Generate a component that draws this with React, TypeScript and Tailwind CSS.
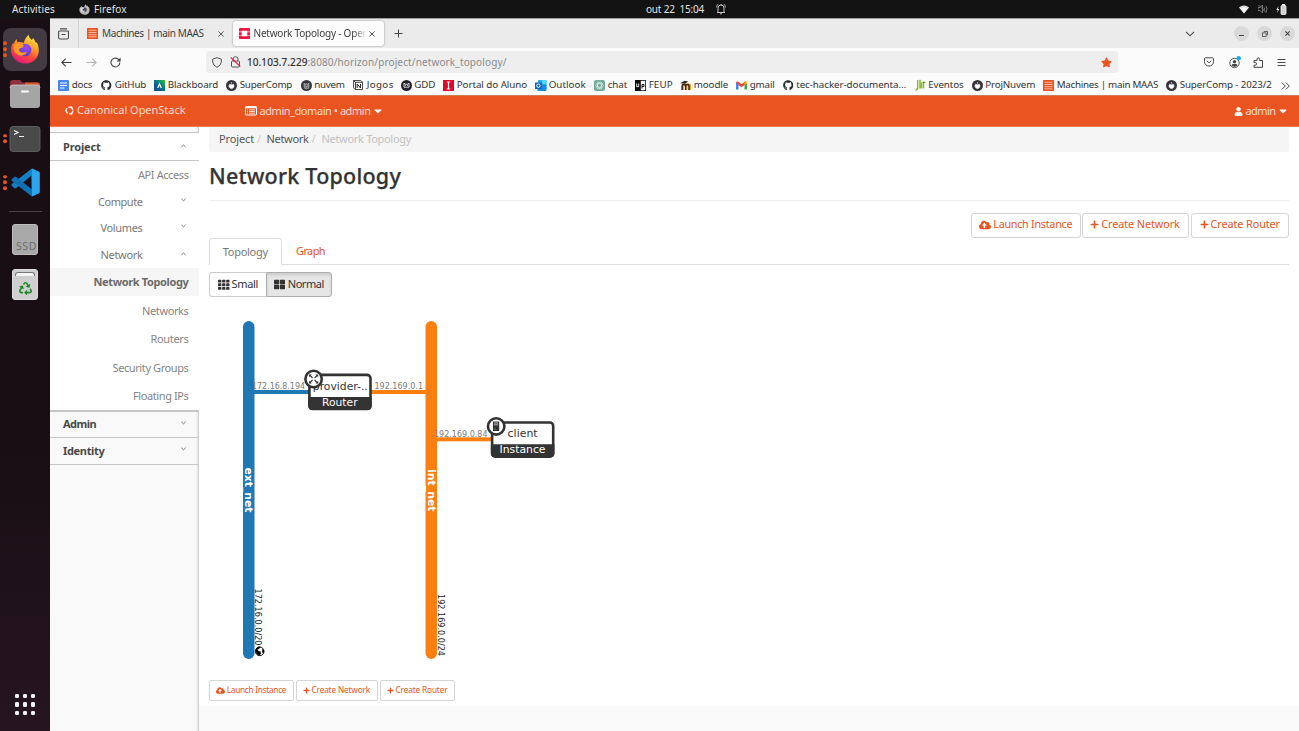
import { useLayoutEffect, useRef, type ReactNode } from "react";
import { FaCloudUploadAlt, FaPlus, FaTh, FaThLarge, FaUser, FaCaretDown, FaStar, FaGithub, FaRecycle } from "react-icons/fa";

/** Single line of text whose tracking is tuned so that it fills exactly `w` pixels. */
function Fit({ w, children, className = "" }: { w: number; children: string; className?: string }) {
  const ref = useRef<HTMLSpanElement>(null);
  useLayoutEffect(() => {
    const el = ref.current;
    if (!el) return;
    el.style.letterSpacing = "0px";
    const range = document.createRange();
    range.selectNodeContents(el);
    const natural = range.getBoundingClientRect().width;
    el.style.letterSpacing = `${(w - natural) / children.length}px`;
  }, [w, children]);
  return (
    <span ref={ref} className={`inline-block shrink-0 whitespace-pre ${className}`} style={{ width: w }}>
      {children}
    </span>
  );
}

/* ---------- system icons ---------- */

function FirefoxLogo({ mono = false, size }: { mono?: boolean; size: number }) {
  return (
    <svg width={size} height={size} viewBox="0 0 30 30">
      <defs>
        <linearGradient id="fxBody" x1="0.8" y1="0" x2="0.3" y2="1">
          <stop offset="0" stopColor="#fff44f" />
          <stop offset="0.35" stopColor="#ffa32b" />
          <stop offset="0.65" stopColor="#ff4a3d" />
          <stop offset="1" stopColor="#e3157f" />
        </linearGradient>
        <radialGradient id="fxGlobe" cx="0.6" cy="0.3" r="0.8">
          <stop offset="0" stopColor="#a14af5" />
          <stop offset="1" stopColor="#4a3ad0" />
        </radialGradient>
      </defs>
      <path
        d="M18.500.8c.4 2.300 1.600 3.700 3.200 5.100.7-.2.9-1 1-1.900 1.600 1.200 2.600 3.200 3.100 5.100l1-.9c2.200 4.200 2.800 9.700.7 14-2.300 4.700-7 7.300-12.200 7.300C7.300 29.500 1 23.600 1 16c0-3.200.9-5.700 2.400-7.500l.4 2c.3-2.300 1.300-4.100 2.900-5.600 0 1.500.5 2.500 1.300 3.300 2.400-.5 4.300-.1 5.800.9C14.500 5.600 16.500 2.800 18.500.8z"
        fill={mono ? "#b9b9b9" : "url(#fxBody)"}
      />
      <circle cx="15" cy="16" r="6.300" fill={mono ? "#4b4b4b" : "url(#fxGlobe)"} />
      <path
        d="M3.500 11c2.700-2.300 7.500-2.200 10.300.2l-1 2c-1 .9-2.400.6-3.300 1.600-1 1.200.2 3.300 2 3.700 2 .5 3.700-.8 5.500-.2-1.500 2.700-5 4-8.200 3C5 20 3 16 3.500 11z"
        fill={mono ? "#d5d5d5" : "#ff9a22"}
      />
    </svg>
  );
}

const FolderIcon = () => (
  <svg width="32" height="30" viewBox="0 0 32 30">
    <path d="M1 4a3 3 0 0 1 3-3h7l2.500 2.500H28A3 3 0 0 1 31 6.500V12H1z" fill="#8d3040" />
    <path d="M16 3.500h12a3 3 0 0 1 3 3V12H16z" fill="#dd5527" />
    <rect x="1" y="6" width="30" height="23" rx="3" fill="#a5a5a5" />
    <path d="M1 9a3 3 0 0 1 3-3h24a3 3 0 0 1 3 3" fill="none" stroke="#c9c9c9" strokeWidth=".8" />
    <rect x="12" y="11.500" width="8" height="2" rx="1" fill="#fff" />
  </svg>
);

const TerminalIcon = () => (
  <svg width="32" height="26" viewBox="0 0 32 26">
    <rect x="1" y=".5" width="30" height="25" rx="3" fill="#4a4a4a" stroke="#686868" strokeWidth=".8" />
    <path d="M5 4.500l4 2-4 2M10 10.500h5" fill="none" stroke="#f2f2f2" strokeWidth="1.200" />
  </svg>
);

const CodeIcon = () => (
  <svg width="29" height="29" viewBox="0 0 100 100">
    <path d="M72 2L98 14V86L72 98 70 27 18 69Q14 72 11 69L3 62Q0 58 3 55Z" fill="#1580c4" />
    <path d="M72 98L3 45Q0 42 3 38L11 31Q14 28 18 31L72 73Z" fill="#0f6fb3" />
    <path d="M72 2L96 13Q99 15 99 18V82Q99 85 96 87L72 98Z" fill="#2aa5ee" />
  </svg>
);

const DriveIcon = () => (
  <div className="flex h-[31px] w-[26px] items-end justify-end overflow-hidden rounded-[3px] border border-[#bdbdbd] bg-[#a8a8a8] text-[10.500px] leading-[16px] text-[#6d6d6d]">
    <Fit w={21}>SSD</Fit>
  </div>
);

const TrashIcon = () => (
  <div className="flex h-[31px] w-[26px] flex-col items-center gap-[6px] rounded-[3px] border border-[#dcdcdc] bg-[#cfcfcf] pt-[2px]">
    <div className="h-[4px] w-[20px] rounded-t-[3px] border-x border-t border-[#777] bg-[#f5f5f5]" />
    <FaRecycle size={13} color="#1f8a27" />
  </div>
);

function Dots({ n }: { n: number }) {
  return (
    <div className="flex w-[9px] shrink-0 flex-col items-center gap-[2px] pl-[1px]">
      {Array.from({ length: n }, (_, i) => (
        <span key={i} className="size-[3.800px] rounded-full bg-[#e95420]" />
      ))}
    </div>
  );
}

function DockItem({ n = 0, top, h, children, active = false }: { n?: number; top: string; h: string; children: ReactNode; active?: boolean }) {
  return (
    <div className={`flex w-[50px] items-center ${top} ${h}`}>
      <div className={`relative ml-[3px] flex h-full w-[44px] items-center justify-center rounded-[8px] ${active ? "bg-[#443b42]" : ""}`}>
        {n > 0 && (
          <div className="absolute top-1/2 left-[-3px] -translate-y-1/2">
            <Dots n={n} />
          </div>
        )}
        {children}
      </div>
    </div>
  );
}

/* ---------- favicons ---------- */

const MaasIcon = () => (
  <svg width="11" height="11" viewBox="0 0 11 11">
    <rect width="11" height="11" rx=".6" fill="#e95420" />
    <path d="M1.500 2.300h8M1.500 4.500h8M1.500 6.700h8M1.500 8.800h8" stroke="#fff" strokeOpacity=".75" strokeWidth=".8" />
  </svg>
);

const OpenStackIcon = () => (
  <svg width="11" height="11" viewBox="0 0 12 12">
    <path d="M1 0h10a1 1 0 0 1 1 1v2.800H9V3H3v.8H0V1a1 1 0 0 1 1-1zM0 4.500h3v3H0zM9 4.500h3v3H9zM0 8.200h3V9h6v-.8h3V11a1 1 0 0 1-1 1H1a1 1 0 0 1-1-1z" fill="#ed1944" />
  </svg>
);

const DocsIcon = () => (
  <svg width="11" height="11" viewBox="0 0 11 11">
    <rect width="11" height="11" rx="1" fill="#4587f0" />
    <path d="M2 3h7M2 5.500h7M2 8h4.500" stroke="#fff" strokeWidth="1.100" />
  </svg>
);

const BlackboardIcon = () => (
  <svg width="11" height="11" viewBox="0 0 11 11">
    <defs>
      <linearGradient id="bb" x1="0" y1="1" x2="1" y2="0">
        <stop offset=".3" stopColor="#0b5796" />
        <stop offset=".65" stopColor="#078c7a" />
        <stop offset="1" stopColor="#40c020" />
      </linearGradient>
    </defs>
    <rect width="11" height="11" fill="url(#bb)" />
    <path d="M3.700 8L5.500 4 7.300 8" fill="none" stroke="#fff" strokeWidth="1.200" />
  </svg>
);

const RoundIcon = ({ kind }: { kind: "power" | "cat" | "mask" }) => (
  <svg width="11" height="11" viewBox="0 0 11 11">
    <circle cx="5.500" cy="5.500" r="5.500" fill={kind === "mask" ? "#23232f" : "#35353b"} />
    {kind === "power" && <path d="M5.500 2v1.800M3.700 4.200a2.500 2.500 0 1 0 3.600 0q-1.800 1-3.600 0z" fill="#fff" stroke="#fff" strokeWidth=".6" />}
    {kind === "cat" && <path d="M3 3.200l1.300.8h2.400l1.300-.8v3.300a2.500 2.400 0 0 1-5 0zM4.300 5.500l1.200 1.500 1.200-1.500" fill="#777" stroke="#ccc" strokeWidth=".6" />}
    {kind === "mask" && <path d="M3 3.200l1.300 1h2.400l1.300-1v4H3zM4 5.300h1M6 5.300h1" fill="none" stroke="#fff" strokeWidth=".8" />}
  </svg>
);

const NotionIcon = () => (
  <svg width="10" height="10" viewBox="0 0 11 11">
    <path d="M.6.600L8.300.5l2.200 1.800v8.200H2.600L.6 8.500z" fill="#fff" stroke="#222" strokeWidth=".9" />
    <path d="M.8.8l1.900 1.700h7.500M2.700 2.500v8" fill="none" stroke="#222" strokeWidth="1" />
    <path d="M4.600 8.800V4.400l3.600 4.400V4.400" fill="none" stroke="#222" strokeWidth="1.100" />
  </svg>
);

const PortalIcon = () => (
  <svg width="11" height="11" viewBox="0 0 11 11">
    <rect width="11" height="11" fill="#e3062b" />
    <path d="M3.800 2h3.400M5.500 2v7M3.800 9h3.400" stroke="#fff" strokeWidth="1.200" />
  </svg>
);

const OutlookIcon = () => (
  <svg width="12" height="11" viewBox="0 0 12 11">
    <rect x="3" y="0" width="8.500" height="9.500" rx=".8" fill="#28a8ea" />
    <path d="M7 0h4.500v4H7z" fill="#50d9ff" />
    <path d="M2.500 4.500h9V10a.9.900 0 0 1-.9.900H3.400a.9.900 0 0 1-.9-.9z" fill="#1490df" />
    <rect x="0" y="2.500" width="6.800" height="6.500" rx=".6" fill="#0f65b8" />
    <circle cx="3.400" cy="5.700" r="1.700" fill="none" stroke="#fff" strokeWidth="1" />
  </svg>
);

const ChatIcon = () => (
  <svg width="11" height="11" viewBox="0 0 11 11">
    <rect width="11" height="11" rx="2" fill="#74aa9c" />
    <g fill="none" stroke="#fff" strokeOpacity=".8" strokeWidth=".6">
      <ellipse cx="5.500" cy="5.500" rx="3.800" ry="1.900" />
      <ellipse cx="5.500" cy="5.500" rx="3.800" ry="1.900" transform="rotate(60 5.500 5.500)" />
      <ellipse cx="5.500" cy="5.500" rx="3.800" ry="1.900" transform="rotate(120 5.500 5.500)" />
    </g>
  </svg>
);

const FeupIcon = () => (
  <svg width="11" height="11" viewBox="0 0 11 11">
    <rect x=".4" y=".4" width="10.200" height="10.200" fill="#fff" stroke="#111" strokeWidth=".8" />
    <rect width="5.800" height="11" fill="#0a0a0a" />
    <path d="M1.700 3.500v3.200h2V3.500" fill="none" stroke="#fff" strokeWidth=".9" />
    <path d="M7 8.500V4.500h2v2H7" fill="none" stroke="#111" strokeWidth="1" />
  </svg>
);

const MoodleIcon = () => (
  <svg width="12" height="11" viewBox="0 0 12 11">
    <path d="M2.700 10V6q0-1.700 1.800-1.700T6.300 6v4M6.300 6q0-1.700 1.900-1.700T10 6v4" fill="none" stroke="#f9a11b" strokeWidth="2.300" />
    <path d="M2.200 10V6.300q0-1.700 1.700-1.700T5.600 6.300V10M5.600 6.300q0-1.700 1.700-1.700T9 6.300V10" fill="none" stroke="#332419" strokeWidth="1.500" />
    <path d="M0 3.300L4.500.8l3.700.7-3.200 2.300z" fill="#2b2b2b" />
  </svg>
);

const GmailIcon = () => (
  <svg width="11" height="9" viewBox="0 0 11 9">
    <path d="M0 1.500V8.500H2.500V3z" fill="#4285f4" />
    <path d="M11 1.500V8.500H8.500V3z" fill="#34a853" />
    <path d="M0 1.500Q.5-.3 2.200.8L5.500 3.300 8.800.8Q10.500-.3 11 1.500L8.500 4 5.500 6.300 2.500 4z" fill="#ea4335" />
    <path d="M8.500 1L9 .6Q10.600-.2 11 1.500V2.500L8.500 4z" fill="#fbbc04" />
  </svg>
);

const EventosIcon = () => (
  <svg width="11" height="12" viewBox="0 0 11 12">
    <path d="M2.700 1v7.500Q2.700 11 .5 11M5 .8v8.700M5 5.500q.5-1.200 1.500-1.200V9.500M8.500 2.500v7" fill="none" stroke="#8fb93a" strokeWidth="1.500" />
    <path d="M7.500 3.500h3" stroke="#6c9a2a" strokeWidth="1.200" />
  </svg>
);

type Bookmark = { icon: ReactNode; label: string; w: number; slot: number };
const gh = <FaGithub size={10.5} color="#24292f" />;
const bookmarks: Bookmark[] = [
  { icon: <DocsIcon />, label: "docs", w: 20.5, slot: 43 },
  { icon: gh, label: "GitHub", w: 31.5, slot: 53 },
  { icon: <BlackboardIcon />, label: "Blackboard", w: 50.5, slot: 72 },
  { icon: <RoundIcon kind="power" />, label: "SuperComp", w: 52.5, slot: 74.5 },
  { icon: <RoundIcon kind="cat" />, label: "nuvem", w: 30.5, slot: 52.5 },
  { icon: <NotionIcon />, label: "Jogos", w: 27, slot: 47.5 },
  { icon: <RoundIcon kind="mask" />, label: "GDD", w: 21, slot: 42.5 },
  { icon: <PortalIcon />, label: "Portal do Aluno", w: 70.5, slot: 92 },
  { icon: <OutlookIcon />, label: "Outlook", w: 37, slot: 59 },
  { icon: <ChatIcon />, label: "chat", w: 19.5, slot: 41 },
  { icon: <FeupIcon />, label: "FEUP", w: 24, slot: 45 },
  { icon: <MoodleIcon />, label: "moodle", w: 34.5, slot: 56 },
  { icon: <GmailIcon />, label: "gmail", w: 25, slot: 46.5 },
  { icon: gh, label: "tec-hacker-documenta…", w: 110, slot: 132 },
  { icon: <EventosIcon />, label: "Eventos", w: 35.5, slot: 57 },
  { icon: <RoundIcon kind="power" />, label: "ProjNuvem", w: 50, slot: 71.5 },
  { icon: <MaasIcon />, label: "Machines | main MAAS", w: 101.5, slot: 123 },
  { icon: <RoundIcon kind="power" />, label: "SuperComp - 2023/2", w: 92, slot: 114.5 },
];

/* ---------- desktop shell ---------- */

function TopBar() {
  return (
    <header className="flex h-[18px] shrink-0 items-center bg-[#131313] text-[10px] text-[#e2e2e2]">
      <Fit w={43} className="ml-[12px]">Activities</Fit>
      <span className="ml-[24px] flex"><FirefoxLogo mono size={11} /></span>
      <Fit w={32.5} className="ml-[4px]">Firefox</Fit>
      <Fit w={58} className="ml-[519.500px]">out 22  15:04</Fit>
      <svg className="ml-[11.500px]" width="10" height="12" viewBox="0 0 10 12" fill="none" stroke="#d5d5d5" strokeWidth=".9">
        <path d="M1 9.500h8M2 9V5a3 3 0 0 1 6 0v4M4 10.800h2M.7 4.500Q.6 2.500 2 1.200M9.300 4.500Q9.400 2.500 8 1.200M5 1v1" />
      </svg>
      <svg className="ml-[513px]" width="10" height="9" viewBox="0 0 10 9"><path d="M0 2.500Q5-1.500 10 2.500L5 8.500z" fill="#f4f4f4" /><path d="M1.500 2.700Q5 .3 8.500 2.700" fill="none" stroke="#aaa" strokeWidth=".5" /></svg>
      <svg className="ml-[9px]" width="10" height="10" viewBox="0 0 10 10" fill="none" stroke="#777"><path d="M0 3.500h2L4.500 1v8L2 6.500H0zM6 3.500q1 1.500 0 3M8 2q2 3 0 6M.5 1l8 8" /></svg>
      <svg className="ml-[8.500px]" width="12" height="11" viewBox="0 0 12 11"><path d="M2.500 2L.3 6h1.500L1 9l2.300-4H2z" fill="#eee" /><rect x="5" y="1.500" width="5" height="9" rx="1" fill="#cfcfcf" stroke="#f5f5f5" strokeWidth=".8" /><rect x="6" y="0" width="3" height="1.500" fill="#f5f5f5" /></svg>
    </header>
  );
}

function Dock() {
  return (
    <aside className="flex w-[50px] shrink-0 flex-col items-center bg-linear-to-b from-[#190e14] from-60% to-[#26151f]">
      <DockItem n={3} active top="mt-[9.500px]" h="h-[43.500px]"><FirefoxLogo size={30} /></DockItem>
      <DockItem top="mt-[8px]" h="h-[30px]"><FolderIcon /></DockItem>
      <DockItem n={2} top="mt-[16.500px]" h="h-[26px]"><TerminalIcon /></DockItem>
      <DockItem n={3} top="mt-[15px]" h="h-[32px]"><CodeIcon /></DockItem>
      <div className="mt-[12.500px] h-px w-[33px] bg-[#4c4348]" />
      <DockItem top="mt-[12px]" h="h-[31px]"><DriveIcon /></DockItem>
      <DockItem top="mt-[14px]" h="h-[31px]"><TrashIcon /></DockItem>
      <div className="mt-auto mb-[16px] grid grid-cols-3 gap-[4px]">
        {Array.from({ length: 9 }, (_, i) => <span key={i} className="size-[4.300px] rounded-[1.200px] bg-[#f3f3f3]" />)}
      </div>
    </aside>
  );
}

/* ---------- browser chrome ---------- */

const X = ({ size = 6, w = 0.9 }: { size?: number; w?: number }) => (
  <svg width={size} height={size} viewBox="0 0 6 6"><path d="M.4.400l5.200 5.200M5.600.400L.4 5.600" stroke="#4a4a4a" strokeWidth={w} /></svg>
);

function TabStrip() {
  return (
    <div className="flex h-[30px] shrink-0 items-center border-t border-[#9c9c9c] bg-[#ebebeb] text-[10px] text-[#3d3d3d]">
      <div className="flex h-full w-[29px] items-center border-r border-[#d2d2d2] pl-[8px]">
        <svg width="11" height="12" viewBox="0 0 11 12" fill="none" stroke="#4a4a4a" strokeWidth="1.100">
          <path d="M2 .9h7M1.500 3h8a1 1 0 0 1 1 1v5.500a1.500 1.500 0 0 1-1.500 1.500H2A1.500 1.500 0 0 1 .6 9.500V4a1 1 0 0 1 .9-1zM3.500 6.500h4" />
        </svg>
      </div>
      <span className="ml-[8px] flex"><MaasIcon /></span>
      <Fit w={101.5} className="ml-[4px]">Machines | main MAAS</Fit>
      <span className="ml-[14px] flex"><X /></span>
      <div className="ml-[9.500px] flex h-[25px] w-[150.500px] items-center rounded-[3px] bg-[#fcfcfc] pl-[6px] shadow-[0_0_2px_rgba(0,0,0,.45)]">
        <OpenStackIcon />
        <span className="ml-[3.500px] [mask-image:linear-gradient(90deg,#000_88%,transparent)]">
          <Fit w={113}>Network Topology - Oper</Fit>
        </span>
        <span className="ml-[2px] flex"><X /></span>
      </div>
      <svg className="ml-[10px]" width="9" height="9" viewBox="0 0 9 9"><path d="M4.500.5v8M.5 4.500h8" stroke="#444" strokeWidth="1" /></svg>
      <svg className="ml-auto" width="10" height="6" viewBox="0 0 10 6"><path d="M1 .8l4 4 4-4" fill="none" stroke="#4a4a4a" strokeWidth="1.100" /></svg>
      <div className="mr-[4px] ml-[39.500px] flex gap-[8px]">
        <span className="flex size-[15px] items-center justify-center rounded-full bg-[#d9d9d9]"><span className="mt-[3px] h-px w-[5px] bg-[#444]" /></span>
        <span className="flex size-[15px] items-center justify-center rounded-full bg-[#d9d9d9]">
          <svg width="6" height="6" viewBox="0 0 6 6" fill="none" stroke="#444" strokeWidth=".8"><path d="M.5 1.800h3.700v3.700H.5zM1.800.5h3.700v3.700" /></svg>
        </span>
        <span className="flex size-[15px] items-center justify-center rounded-full bg-[#d9d9d9]"><X size={5} w={1.3} /></span>
      </div>
    </div>
  );
}

function NavBar() {
  return (
    <div className="flex h-[28px] shrink-0 items-center bg-[#fbfbfb]">
      <svg className="ml-[11px]" width="11" height="9" viewBox="0 0 11 9" fill="none" stroke="#3f3f3f" strokeWidth="1.100"><path d="M10.500 4.500H1M4.700.7L.9 4.500l3.800 3.800" /></svg>
      <svg className="ml-[14px]" width="11" height="9" viewBox="0 0 11 9" fill="none" stroke="#b5b5b5" strokeWidth="1.100"><path d="M.5 4.500H10M6.300.7l3.800 3.800-3.800 3.800" /></svg>
      <svg className="ml-[12.500px]" width="11" height="11" viewBox="0 0 11 11"><path d="M9.800 5.500A4.400 4.400 0 1 1 7.900 1.900L9 3" fill="none" stroke="#444" strokeWidth="1.100" /><path d="M10.600.4v4H6.600z" fill="#444" /></svg>
      <div className="ml-[85px] flex h-[21.500px] w-[912px] items-center rounded-[3px] bg-[#eeeeee] pl-[6px] text-[10px]">
        <svg width="10" height="11" viewBox="0 0 10 11" fill="none" stroke="#555" strokeWidth="1"><path d="M5 .7l4.300 1.400v3Q9 8.300 5 10.400 1 8.300.7 5.100v-3z" /></svg>
        <svg className="ml-[8.500px]" width="11" height="12" viewBox="0 0 11 12" fill="none"><path d="M3 5V3.200a2.500 2.500 0 0 1 5 0V5M2.500 5h6a1 1 0 0 1 1 1v4a1 1 0 0 1-1 1h-6a1 1 0 0 1-1-1V6a1 1 0 0 1 1-1z" stroke="#555" strokeWidth="1" /><path d="M.8 1.500l9.500 9" stroke="#e22850" strokeWidth="1.200" /></svg>
        <Fit w={60.5} className="ml-[6px] text-[#333] [-webkit-text-stroke:.2px_#333]">10.103.7.229</Fit>
        <Fit w={199} className="text-[#8b8b8b]">:8080/horizon/project/network_topology/</Fit>
        <FaStar className="mr-[5.500px] ml-auto" size={11} color="#e95420" />
      </div>
      <svg className="ml-[86.500px]" width="10" height="10" viewBox="0 0 10 10" fill="none" stroke="#4a4a4a"><path d="M1.300.8h7.400a.8.800 0 0 1 .8.800v3A4.500 4.500 0 0 1 .5 4.600v-3a.8.800 0 0 1 .8-.8zM2.800 3.800L5 5.800l2.200-2" /></svg>
      <svg className="ml-[14.500px]" width="12" height="13" viewBox="0 0 12 13"><circle cx="5.500" cy="7" r="4.700" fill="none" stroke="#444" strokeWidth=".9" /><circle cx="5.500" cy="5.700" r="1.700" fill="#444" /><path d="M2.500 9.700q0-1.700 1.500-1.700h3q1.500 0 1.500 1.700-3 2-6 0z" fill="#444" /><circle cx="9.700" cy="2.300" r="2.200" fill="#18a8f5" /></svg>
      <svg className="ml-[12px]" width="11" height="11" viewBox="0 0 11 11" fill="none" stroke="#444"><path d="M1 5.500V3.500h3V2.200a1.300 1.300 0 0 1 2.600 0v1.300h2.900v6.800H1V8.200h1.200a1.300 1.300 0 0 0 0-2.700z" /></svg>
      <svg className="ml-[13px]" width="9" height="9" viewBox="0 0 9 9" stroke="#4a4a4a"><path d="M.5 1.500h8M.5 4.500h8M.5 7.500h8" /></svg>
    </div>
  );
}

function BookmarksBar() {
  return (
    <div className="flex h-[19px] shrink-0 items-center bg-[#fbfbfb] pl-[8px] text-[9.800px] text-[#333]">
      {bookmarks.map((b, i) => (
        <div key={i} className="flex shrink-0 items-center" style={{ width: b.slot }}>
          <span className="flex w-[13.700px] shrink-0">{b.icon}</span>
          <Fit w={b.w}>{b.label}</Fit>
        </div>
      ))}
      <svg width="9" height="8" viewBox="0 0 9 8" fill="none" stroke="#444"><path d="M.8.500L4.300 4 .8 7.500M4.800.500L8.300 4 4.800 7.500" /></svg>
    </div>
  );
}

/* ---------- dashboard ---------- */

function AppHeader() {
  return (
    <div className="flex h-[32px] shrink-0 items-center border-y border-t-[#cf7a58] border-b-[#ee7a51] bg-[#e95420] text-[11px] text-[#fbdcd1]">
      <svg className="mb-[2px] ml-[15px]" width="9" height="9" viewBox="0 0 10 10"><circle cx="5" cy="5" r="3.700" fill="none" stroke="#fde8e0" strokeWidth="1.500" strokeDasharray="6.300 1.450" /><circle cx="1" cy="5" r="1.100" fill="#fff" /><circle cx="7.200" cy="1.500" r="1.100" fill="#fff" /><circle cx="7.200" cy="8.500" r="1.100" fill="#fff" /></svg>
      <Fit w={108.5} className="mb-[2px] ml-[3px]">Canonical OpenStack</Fit>
      <svg className="ml-[59.500px]" width="12" height="10" viewBox="0 0 12 10"><rect x=".5" y=".5" width="11" height="8.500" rx=".8" fill="none" stroke="#fff" strokeWidth="1" /><path d="M.5 1.500h11" stroke="#fff" strokeWidth="1.500" /><path d="M2 3.800h1M4 3.800h6M2 5.500h1M4 5.500h6M2 7.200h1M4 7.200h6" stroke="#fff" strokeWidth=".8" /></svg>
      <Fit w={111} className="ml-[2.500px]">admin_domain • admin</Fit>
      <FaCaretDown className="ml-[1px]" size={12} color="#fff" />
      <FaUser className="ml-auto" size={9} color="#fff" />
      <Fit w={30} className="ml-[3px]">admin</Fit>
      <FaCaretDown className="mr-[10.500px] ml-[1px]" size={12} color="#fff" />
    </div>
  );
}

const Chevron = ({ up = false }: { up?: boolean }) => (
  <svg width="5" height="4" viewBox="0 0 5 4"><path d={up ? "M.4 3L2.500 1 4.600 3" : "M.4.800L2.500 2.800 4.600.800"} fill="none" stroke="#666" strokeWidth=".9" /></svg>
);

function PanelHead({ label, w, up, h }: { label: string; w: number; up?: boolean; h: string }) {
  return (
    <div className={`flex shrink-0 items-center border-b border-[#c6c6c6] pr-[13px] pl-[13px] ${h} ${up ? "bg-white" : ""}`}>
      <Fit w={w} className="mt-[1px] text-[11px] font-bold text-[#484848]">{label}</Fit>
      <span className={`ml-auto ${up ? "" : "mb-[3px]"}`}><Chevron up={up} /></span>
    </div>
  );
}

function Group({ label, w, up, h }: { label: string; w: number; up?: boolean; h: string }) {
  return (
    <div className={`flex shrink-0 items-center bg-white pr-[13px] ${h}`}>
      <Fit w={w} className="mt-[1px] ml-auto">{label}</Fit>
      <span className={`ml-[38.500px] ${up ? "" : "mb-[4px]"}`}><Chevron up={up} /></span>
    </div>
  );
}

function Item({ label, w, on }: { label: string; w: number; on?: boolean }) {
  return (
    <div className={`flex h-[28.500px] shrink-0 items-center justify-end pt-[1px] pr-[10.500px] ${on ? "bg-[#f6f6f6] font-bold text-[#6a6a6a]" : "bg-white text-[#858585]"}`}>
      <Fit w={w}>{label}</Fit>
    </div>
  );
}

function Sidebar() {
  return (
    <nav className="flex w-[149px] shrink-0 flex-col bg-[#f9f9f9] text-[11px] text-[#777] shadow-[inset_-1px_0_0_#cfcfcf,inset_-3px_0_2px_-1px_#e4e4e4]">
      <div className="h-[6px] shrink-0 border-b border-[#c6c6c6]" />
      <PanelHead label="Project" w={37.5} up h="h-[27.500px]" />
      <Item label="API Access" w={50.5} />
      <Group label="Compute" w={44.5} h="h-[26px]" />
      <Group label="Volumes" w={42} h="h-[26px]" />
      <Group label="Network" w={42} up h="h-[26.500px]" />
      <Item label="Network Topology" w={95} on />
      <Item label="Networks" w={46.5} />
      <Item label="Routers" w={38} />
      <Item label="Security Groups" w={76} />
      <Item label="Floating IPs" w={55.5} />
      <div className="h-[1.500px] shrink-0 bg-[#c6c6c6]" />
      <PanelHead label="Admin" w={33} h="h-[26px]" />
      <PanelHead label="Identity" w={41.5} h="h-[27px]" />
    </nav>
  );
}

function ActionButton({ label, w, box, cloud, small }: { label: string; w: number; box: string; cloud?: boolean; small?: boolean }) {
  return (
    <button className={`flex items-center justify-center border border-[#d5d5d5] bg-white text-[#e95420] ${small ? "h-[21px] gap-[1.500px] rounded-[2px] text-[8.300px]" : "h-[25px] gap-[2px] rounded-[3px] pb-[1px] text-[10.800px]"} ${box}`}>
      {cloud ? <FaCloudUploadAlt size={small ? 9 : 12} /> : <FaPlus size={small ? 7 : 9} />}
      <Fit w={w}>{label}</Fit>
    </button>
  );
}

function Topology() {
  return (
    <svg className="block" width="1100" height="375" viewBox="199 300 1100 375" fontFamily="'DejaVu Sans', sans-serif">
      <rect x="243" y="321" width="11.500" height="338" rx="5.700" fill="#1f77b4" />
      <rect x="425.500" y="321" width="11.500" height="338" rx="5.700" fill="#ff7f0e" />
      <rect x="254" y="390" width="55" height="4" fill="#1f77b4" />
      <rect x="371" y="390" width="55" height="4" fill="#ff7f0e" />
      <rect x="436" y="437.300" width="56" height="4" fill="#ff7f0e" />
      <g fontSize="8.700" fill="#7a7a7a">
        <text x="252" y="389.200" textLength="53" lengthAdjust="spacingAndGlyphs">172.16.8.194</text>
        <text x="374.500" y="389.200" textLength="48.500" lengthAdjust="spacingAndGlyphs">192.169.0.1</text>
        <text x="434" y="436.500" textLength="53.500" lengthAdjust="spacingAndGlyphs">192.169.0.84</text>
      </g>
      <g textAnchor="middle" fontSize="10.800">
        <rect x="309.400" y="374.900" width="61.100" height="34.100" rx="3.500" fill="#fff" stroke="#333" strokeWidth="2.600" />
        <path d="M308.200 397h63.500v9a4 4 0 0 1-4 4h-55.500a4 4 0 0 1-4-4z" fill="#333" />
        <text x="340.300" y="389.800" fill="#333" textLength="55" lengthAdjust="spacingAndGlyphs">provider-..</text>
        <text x="339.800" y="405.800" fill="#fff" textLength="35.500" lengthAdjust="spacingAndGlyphs">Router</text>
        <rect x="492.100" y="422.500" width="61.100" height="34.100" rx="3.500" fill="#fff" stroke="#333" strokeWidth="2.600" />
        <path d="M490.900 444.300h63.500v9.200a4 4 0 0 1-4 4h-55.500a4 4 0 0 1-4-4z" fill="#333" />
        <text x="522.600" y="437.300" fill="#333" textLength="30" lengthAdjust="spacingAndGlyphs">client</text>
        <text x="522.500" y="453.300" fill="#fff" textLength="46" lengthAdjust="spacingAndGlyphs">Instance</text>
      </g>
      <circle cx="313.600" cy="379" r="8.200" fill="#fff" stroke="#333" strokeWidth="2.600" />
      <path d="M310 375.400l2.600 2.600M317.200 375.400l-2.600 2.600M310 382.600l2.600-2.600M317.200 382.600l-2.600-2.600" stroke="#333" strokeWidth="1.200" />
      <path d="M309 374.400h2.800l-2.800 2.800zM318.200 374.400h-2.800l2.800 2.800zM309 383.600h2.800l-2.800-2.800zM318.200 383.600h-2.800l2.800-2.800z" fill="#333" />
      <circle cx="496.200" cy="426.400" r="8.200" fill="#fff" stroke="#333" strokeWidth="2.600" />
      <rect x="493" y="421.500" width="6.200" height="9.500" fill="#333" />
      <path d="M494 423h4.200M494 424.800h4.200" stroke="#ddd" strokeWidth=".8" />
      <circle cx="495" cy="429" r=".7" fill="#3fae4a" />
      <g fontWeight="bold" fontSize="10.800" fill="#fff">
        <text transform="translate(245.300 467.500) rotate(90)" textLength="45" lengthAdjust="spacingAndGlyphs">ext_net</text>
        <text transform="translate(427.900 469) rotate(90)" textLength="42.500" lengthAdjust="spacingAndGlyphs">int_net</text>
      </g>
      <g fontSize="8.700" fill="#222">
        <text transform="translate(255.300 588.500) rotate(90)" textLength="57" lengthAdjust="spacingAndGlyphs">172.16.0.0/20</text>
        <text transform="translate(438.300 594) rotate(90)" textLength="62" lengthAdjust="spacingAndGlyphs">192.169.0.0/24</text>
      </g>
      <circle cx="259.700" cy="651.300" r="4.300" fill="#fff" stroke="#000" strokeWidth="1" />
      <path d="M255.500 650q1.500-4 5-3.500l-1 2-2 1 1 1.500 2 .5.500 2-1.500 2q-3.500-.5-4-5.500zM262.500 648.500l1.500 2-.5 3-1.500-1.500z" fill="#000" />
    </svg>
  );
}

function Content() {
  return (
    <main className="flex min-w-0 grow flex-col bg-[#fafafa]">
      <div className="flex h-[579px] shrink-0 flex-col bg-white">
        <div className="mx-[10px] flex h-[24.500px] shrink-0 items-center rounded-b-[3px] bg-[#f5f5f5] pl-[10px] text-[11px] text-[#555]">
          <Fit w={35} className="mb-[1px]">Project</Fit>
          <Fit w={4} className="mb-[1px] ml-[3px] text-[#ccc]">/</Fit>
          <Fit w={42} className="mb-[1px] ml-[5.500px]">Network</Fit>
          <Fit w={4} className="mb-[1px] ml-[3px] text-[#ccc]">/</Fit>
          <Fit w={89.5} className="mb-[1px] ml-[6px] text-[#c2c2c2]">Network Topology</Fit>
        </div>
        <h1 className="mx-[10px] flex h-[49px] shrink-0 items-center border-b border-[#eee] pt-[1px] text-[21.500px] font-medium text-[#333] [-webkit-text-stroke:.25px_#333]">
          <Fit w={192}>Network Topology</Fit>
        </h1>
        <div className="mx-[10px] mt-[12px] flex h-[25px] shrink-0 justify-end">
          <ActionButton label="Launch Instance" w={79} box="w-[110.500px]" cloud />
          <ActionButton label="Create Network" w={78.5} box="w-[107px] ml-[.5px]" />
          <ActionButton label="Create Router" w={69.5} box="w-[98.500px] ml-[2px]" />
        </div>
        <div className="mx-[10px] flex h-[27.500px] shrink-0 border-b border-[#ddd] text-[11px]">
          <div className="-mb-px flex w-[72.500px] items-center justify-center rounded-t-[3px] border border-b-0 border-[#ddd] bg-white text-[#777]"><Fit w={45}>Topology</Fit></div>
          <div className="ml-[14.500px] flex items-center text-[#e95420]"><Fit w={29}>Graph</Fit></div>
        </div>
        <div className="ml-[10px] mt-[7px] flex h-[25px] shrink-0 text-[11px] text-[#333]">
          <div className="flex w-[57px] items-center justify-center gap-[2px] rounded-l-[3px] border border-r-0 border-[#ccc]"><FaTh size={11.5} /><Fit w={26.5}>Small</Fit></div>
          <div className="flex w-[66px] items-center justify-center gap-[2.500px] rounded-r-[3px] border border-[#adadad] bg-[#e6e6e6] shadow-[inset_0_2px_3px_rgba(0,0,0,.12)]"><FaThLarge size={11} /><Fit w={36}>Normal</Fit></div>
        </div>
        <div className="mt-[3px] shrink-0"><Topology /></div>
        <div className="ml-[10px] mt-[5px] flex shrink-0 gap-[2px]">
          <ActionButton small cloud label="Launch Instance" w={59.5} box="w-[84.500px]" />
          <ActionButton small label="Create Network" w={58.5} box="w-[82px]" />
          <ActionButton small label="Create Router" w={52} box="w-[75.500px]" />
        </div>
      </div>
    </main>
  );
}

export default function App() {
  return (
    <div className="flex h-[731px] w-[1299px] flex-col overflow-hidden bg-white font-['Noto_Sans','Open_Sans',sans-serif] leading-[1.3]">
      <TopBar />
      <div className="flex min-h-0 grow">
        <Dock />
        <div className="flex min-w-0 grow flex-col">
          <TabStrip />
          <NavBar />
          <BookmarksBar />
          <AppHeader />
          <div className="flex min-h-0 grow">
            <Sidebar />
            <Content />
          </div>
        </div>
      </div>
    </div>
  );
}
